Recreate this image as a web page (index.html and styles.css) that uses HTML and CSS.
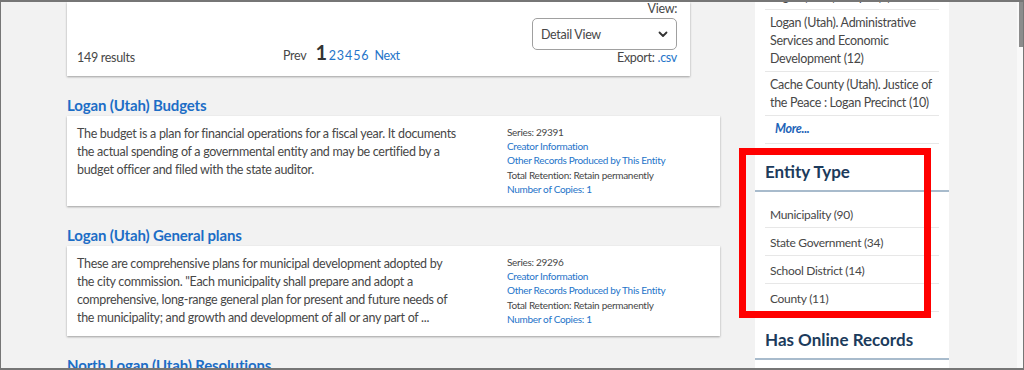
FILE: index.html
```html
<!DOCTYPE html>
<html>
   <head>
      <meta charset="UTF-8">
      <meta name="viewport" content="width=device-width, initial-scale=1.0"/>
      <title>Records search results</title>
      <link rel="stylesheet" href="styles.css">
   </head>
   <body>
      <div class="frame">
         <div class="page">
            <div class="main">
               <div class="results-bar">
                  <span class="results-count">149 results</span>
                  <div class="pager">
                     <span class="pager-prev">Prev</span>
                     <span class="pager-current">1</span>
                     <a href="#" class="pager-num">2</a>
                     <a href="#" class="pager-num">3</a>
                     <a href="#" class="pager-num">4</a>
                     <a href="#" class="pager-num">5</a>
                     <a href="#" class="pager-num">6</a>
                     <a href="#" class="pager-next">Next</a>
                  </div>
                  <div class="view-box">
                     <span class="view-label">View:</span>
                     <div class="view-select">
                        <span>Detail View</span>
                        <svg width="10" height="7" viewBox="0 0 10 7"><path d="M1.5 1.5 L5 5 L8.5 1.5" fill="none" stroke="#333" stroke-width="1.8" stroke-linecap="round" stroke-linejoin="round"/></svg>
                     </div>
                     <span class="export">Export: <a href="#">.csv</a></span>
                  </div>
               </div>

               <h2 class="record-title"><a href="#">Logan (Utah) Budgets</a></h2>
               <div class="record">
                  <p class="record-desc">The budget is a plan for financial operations for a fiscal year. It documents the actual spending of a governmental entity and may be certified by a budget officer and filed with the state auditor.</p>
                  <ul class="record-meta">
                     <li>Series: 29391</li>
                     <li><a href="#">Creator Information</a></li>
                     <li><a href="#">Other Records Produced by This Entity</a></li>
                     <li>Total Retention: Retain permanently</li>
                     <li><a href="#">Number of Copies: 1</a></li>
                  </ul>
               </div>

               <h2 class="record-title"><a href="#">Logan (Utah) General plans</a></h2>
               <div class="record">
                  <p class="record-desc">These are comprehensive plans for municipal development adopted by the city commission. "Each municipality shall prepare and adopt a comprehensive, long-range general plan for present and future needs of the municipality; and growth and development of all or any part of ...</p>
                  <ul class="record-meta">
                     <li>Series: 29296</li>
                     <li><a href="#">Creator Information</a></li>
                     <li><a href="#">Other Records Produced by This Entity</a></li>
                     <li>Total Retention: Retain permanently</li>
                     <li><a href="#">Number of Copies: 1</a></li>
                  </ul>
               </div>

               <h2 class="record-title"><a href="#">North Logan (Utah) Resolutions</a></h2>
            </div>

            <div class="sidebar">
               <ul class="facet-list facet-top">
                  <li>Logan (Utah). Mayor (9)</li>
                  <li>Logan (Utah). Administrative Services and Economic Development (12)</li>
                  <li>Cache County (Utah). Justice of the Peace : Logan Precinct (10)</li>
                  <li class="facet-more"><a href="#">More...</a></li>
               </ul>

               <h3 class="facet-heading">Entity Type</h3>
               <ul class="facet-list facet-small">
                  <li>Municipality (90)</li>
                  <li>State Government (34)</li>
                  <li>School District (14)</li>
                  <li>County (11)</li>
               </ul>

               <h3 class="facet-heading">Has Online Records</h3>
            </div>
         </div>
         <div class="scrollbar"><div class="scroll-thumb"></div></div>

         <div class="highlight"></div>
      </div>
   </body>
</html>
```

FILE: styles.css
```css
*
{
   box-sizing: border-box;
}

body
{
   margin: 0;
   font-family: Lato, "Liberation Sans", sans-serif;
   font-size: 12.5px;
   letter-spacing: -0.3px;
   color: #474747;
}

a
{
   color: #2474c9;
   text-decoration: none;
}

.frame
{
   position: relative;
   display: flex;
   height: 370px;
   overflow: hidden;
   border: 1px solid #767676;
   border-top-width: 2px;
   border-bottom-width: 2px;
   background: #f2f2f2;
}

.page
{
   flex: 1;
   display: flex;
   gap: 35px;
   padding-left: 66px;
}

.main
{
   width: 653px;
}

.results-bar
{
   display: flex;
   align-items: flex-end;
   margin-right: 30px;
   padding: 0 13px 10px 10px;
   background: #fff;
   box-shadow: 0 1px 2px rgba(0, 0, 0, 0.35);
}

.results-count
{
   width: 206px;
   line-height: 16px;
}

.pager
{
   display: flex;
   align-items: baseline;
   margin-bottom: 2px;
}

.pager-prev
{
   margin-right: 9px;
}

.pager-current
{
   margin-right: 2px;
   font-size: 20px;
   font-weight: bold;
   color: #333;
}

.pager-num
{
   margin-right: 1.2px;
}

.pager-next
{
   margin-left: 5px;
}

.view-box
{
   display: flex;
   flex-direction: column;
   align-items: flex-end;
   margin-left: auto;
}

.view-label
{
   line-height: 14px;
}

.view-select
{
   display: flex;
   align-items: center;
   justify-content: space-between;
   width: 145px;
   height: 32px;
   margin-top: 2px;
   padding: 0 8px;
   border: 1px solid #a0a0a0;
   border-radius: 5px;
}

.export
{
   line-height: 16px;
}

.record-title
{
   margin: 19px 0 1px;
   font-size: 15px;
   line-height: 20px;
   letter-spacing: -0.15px;
   font-weight: bold;
}

.record-title a
{
   color: #1c6dc6;
}

.record
{
   display: flex;
   height: 90px;
   padding: 9px 10px 10px;
   background: #fff;
   box-shadow: 0 1px 2px rgba(0, 0, 0, 0.35);
}

.record-desc
{
   flex: 0 0 382px;
   margin: 0 48px 0 0;
   line-height: 18px;
}

.record-meta
{
   margin: 0;
   padding: 0;
   list-style: none;
   font-size: 10px;
   line-height: 14.2px;
}

.sidebar
{
   width: 194px;
   background: #fff;
}

.facet-list
{
   margin: 0;
   padding: 0 10px;
   list-style: none;
}

.facet-list li
{
   padding: 4px 0 3px 5px;
   border-bottom: 1px solid #e7e7e7;
   line-height: 18px;
}

.facet-top
{
   margin-top: -18px;
}

.facet-more
{
   padding-left: 10px !important;
   padding-bottom: 5px !important;
}

.facet-more a
{
   font-weight: bold;
   font-style: italic;
   color: #1d63b8;
}

.facet-heading
{
   margin: 0;
   padding: 17px 10px 7px;
   border-bottom: 2px solid #a8bbcc;
   font-size: 17px;
   line-height: 22px;
   letter-spacing: 0;
   color: #1c3b5c;
}

.facet-small
{
   padding-top: 8px;
}

.facet-small li
{
   padding: 6px 0 3px 5px;
   font-size: 12px;
}

.scrollbar
{
   width: 6px;
   padding-left: 2px;
   background: #f9f9f9;
}

.scroll-thumb
{
   height: 45px;
   background: #8c8c8c;
}

.highlight
{
   position: absolute;
   left: 738px;
   top: 146px;
   width: 192px;
   height: 170px;
   border: 7px solid #ff0000;
}
```
